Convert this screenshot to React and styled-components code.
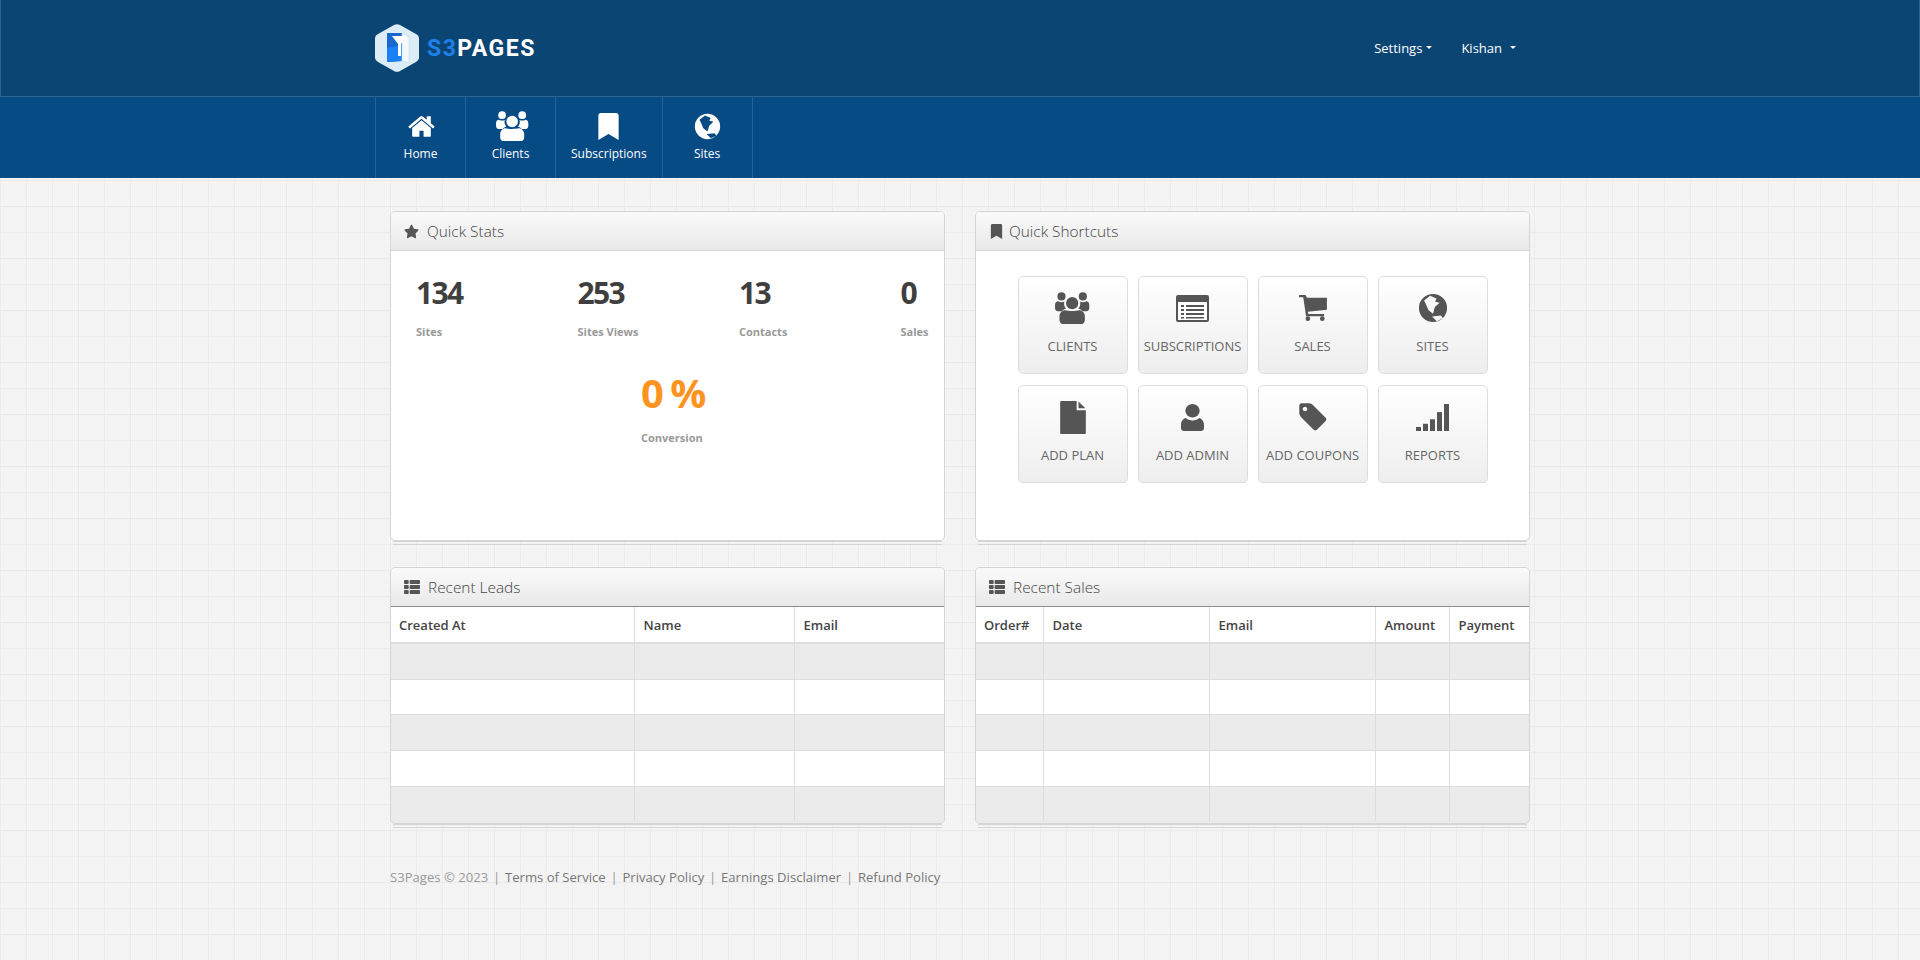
import React from 'react'
import styled, { createGlobalStyle } from 'styled-components'
import { FaBookmark, FaStar, FaThList } from 'react-icons/fa'

const Global = createGlobalStyle`
html, body { margin: 0; padding: 0; }
body {
  min-height: 960px;
  font-family: "Open Sans", sans-serif;
  font-size: 13px;
  color: #444;
  background-color: #f2f2f2;
  background-image:
    linear-gradient(#ebebeb 1px, transparent 1px),
    linear-gradient(90deg, #ebebeb 1px, transparent 1px),
    conic-gradient(#f8f8f8 25%, transparent 25%);
  background-size: 26px 26px, 26px 26px, 2px 2px;
  background-position: 0 24px, 0 0, 0 0;
}
`

const TopBar = styled.header`
  height: 96px;
  background: #0b4574;
  border: 1px solid #2a6596;
  border-top: 0;
  display: flex;
  justify-content: center;
`
const Inner = styled.div`
  width: 1170px;
  display: flex;
  align-items: center;
  justify-content: space-between;
`
const Brand = styled.a`
  display: flex;
  align-items: center;
  gap: 8px;
  font-family: Roboto, sans-serif;
  font-weight: 700;
  font-size: 23px;
  letter-spacing: 1.5px;
  color: #fff;
`
const BrandAccent = styled.span`
  color: #1f80ea;
`
const UserMenu = styled.div`
  display: flex;
  gap: 29px;
  margin-right: 29px;
  color: #fff;
  font-size: 13px;
`
const MenuItem = styled.a`
  display: flex;
  align-items: center;
  gap: ${p => p.$gap || 4}px;
`
const Caret = styled.span`
  width: 0;
  height: 0;
  margin-top: -1px;
  border-left: 3.5px solid transparent;
  border-right: 3.5px solid transparent;
  border-top: 3.5px solid #fff;
`
const SubNav = styled.nav`
  height: 81px;
  background: #074b85;
  display: flex;
  justify-content: center;
`
const SubNavInner = styled.div`
  width: 1170px;
  display: flex;
`
const NavItem = styled.a`
  min-width: 90px;
  padding: 0 15px;
  box-sizing: border-box;
  border-left: 1px solid #25619a;
  display: flex;
  flex-direction: column;
  align-items: center;
  color: #fff;
  font-size: 12px;
  &:last-child { border-right: 1px solid #25619a; min-width: 91px; }
`
const NavIcon = styled.span`
  height: 30px;
  margin-top: 14px;
  margin-bottom: 4px;
  margin-left: ${p => p.$shift || 0}px;
  font-size: 28px;
  display: flex;
  align-items: center;
`
const Page = styled.main`
  width: 1140px;
  margin: 33px auto 0;
`
const Grid = styled.div`
  display: grid;
  grid-template-columns: 555px 555px;
  column-gap: 30px;
  row-gap: 26px;
`
const Widget = styled.section`
  position: relative;
  box-sizing: border-box;
  background: ${p => p.$fill || '#fff'};
  border: 1px solid #d5d5d5;
  border-radius: 5px;
  height: ${p => p.$h}px;
  &::after {
    content: '';
    position: absolute;
    left: 2px;
    right: 2px;
    bottom: -5px;
    height: 2px;
    border-top: 1px solid #d5d5d5;
    border-bottom: 1px solid #d5d5d5;
  }
`
const WidgetHead = styled.div`
  height: 39px;
  box-sizing: border-box;
  padding-left: 13px;
  background: linear-gradient(#fafafa, #e9e9e9);
  border-bottom: 1px solid ${p => p.$dark ? '#8f8f8f' : '#d5d5d5'};
  border-radius: 4px 4px 0 0;
  display: flex;
  align-items: center;
  gap: ${p => p.$gap || 8}px;
  font-size: 15.4px;
  font-weight: 300;
  color: #444;
  svg { color: #555; font-size: 15px; }
`
const StatsRow = styled.div`
  display: grid;
  grid-template-columns: repeat(4, 161.5px);
  padding: 22px 0 0 25px;
`
const StatBox = styled.div`
  display: flex;
  flex-direction: column;
`
const StatNum = styled.div`
  font-size: 30px;
  line-height: 40px;
  font-weight: 700;
  letter-spacing: -1.6px;
  color: #3f3f3f;
`
const StatLabel = styled.div`
  margin-top: ${p => p.$top ?? 9}px;
  font-size: 11px;
  line-height: 20px;
  font-weight: 700;
  color: #999;
`
const Conversion = styled.div`
  display: flex;
  flex-direction: column;
  align-items: flex-start;
  margin-top: 24px;
  margin-left: 250px;
`
const ConversionNum = styled.div`
  font-size: 40px;
  line-height: 54px;
  font-weight: 700;
  letter-spacing: -2px;
  color: #ff931f;
`
const Shortcuts = styled.div`
  display: grid;
  grid-template-columns: repeat(4, 110px);
  grid-auto-rows: 98px;
  gap: 11px 10px;
  justify-content: center;
  padding-top: 25px;
`
const Shortcut = styled.a`
  box-sizing: border-box;
  border: 1px solid #ddd;
  border-radius: 5px;
  background: linear-gradient(#fff, #eee);
  display: flex;
  flex-direction: column;
  align-items: center;
  color: #666;
  font-size: 13px;
`
const ShortcutIcon = styled.span`
  height: 36px;
  margin-top: 13px;
  margin-bottom: 11px;
  color: #555;
  display: flex;
  align-items: center;
`
const Table = styled.table`
  width: 100%;
  border-collapse: collapse;
  table-layout: fixed;
`
const Th = styled.th`
  height: 36px;
  padding: 0 8px 0 9px;
  box-sizing: border-box;
  text-align: left;
  font-size: 13px;
  font-weight: 600;
  color: #444;
  background: #fff;
  border-left: 1px solid #ddd;
  border-bottom: 2px solid #ddd;
  &:first-child { border-left: 0; padding-left: 8px; }
`
const Tr = styled.tr`
  background: ${p => p.$odd ? '#ebebeb' : '#fff'};
`
const Td = styled.td`
  height: 34.7px;
  padding: 0;
  border-left: 1px solid #ddd;
  border-top: 1px solid #ddd;
  &:first-child { border-left: 0; }
`
const Footer = styled.footer`
  margin-top: 43px;
  font-size: 13.1px;
  line-height: 20px;
  color: #999;
`
const FootLink = styled.a`
  color: #777;
`
const FootSep = styled.span`
  margin: 0 1.4px;
`

const GroupSide = 'M0 38c0-7 4-11 9-11 3 2 6 3 10 3 3 0 6-.5 9-2-1 2-1.500 4-1.500 6 0 6 2 11 6 14.500-5 2-9 4-12 8H8c-5 0-8-4-8-10z'
const GroupIcon = ({ size = 34 }) => (
  <svg width={size} height={size * 0.93} viewBox="0 0 103 96" fill="currentColor">
    <circle cx="19" cy="13" r="12" />
    <circle cx="82" cy="13" r="12" />
    <path d={GroupSide} />
    <path d={GroupSide} transform="translate(101 0) scale(-1 1)" />
    <circle cx="50.500" cy="33" r="18" />
    <path d="M13 72c0-10 8-18 17-18 5 1.500 12 2 20.500 2s15.500-.5 20.500-2c9 0 17 8 17 18v10c0 8-6 14-14 14H27c-8 0-14-6-14-14z" />
  </svg>
)
const HomeIcon = () => (
  <svg width="29" height="29" viewBox="0 0 1792 1792" fill="currentColor">
    <path d="M1472 992v480q0 26-19 45t-45 19h-384v-384h-256v384h-384q-26 0-45-19t-19-45v-480q0-1 .5-3t.5-3l575-474 575 474q1 2 1 6zm223-69l-62 74q-8 9-21 11h-3q-13 0-21-7l-692-577-692 577q-12 8-24 7-13-2-21-11l-62-74q-8-10-7-23.500t11-21.500l719-599q32-26 76-26t76 26l244 204v-195q0-14 9-23t23-9h192q14 0 23 9t9 23v408l219 182q10 8 11 21.500t-7 23.500z" />
  </svg>
)
const GlobeIcon = ({ size = 30 }) => (
  <svg width={size} height={size} viewBox="0 0 32 32" fill="currentColor">
    <path
      fillRule="evenodd"
      d="M16 1a15 15 0 1 0 0 30 15 15 0 0 0 0-30zM6.500 8l6.500-5 7 3-2 3 5 1.500-5 4.500-2 7-5-4-2.500-6zM15 25l9.500-1 2 3-6.500 3z"
    />
  </svg>
)
const ListAltIcon = () => (
  <svg width="33" height="27" viewBox="0 0 33 27">
    <rect width="33" height="27" rx="2" fill="#555" />
    <rect x="2" y="7" width="29" height="18" fill="#fff" />
    <path d="M5 10h3v2H5zM10 10h18v2H10zM5 14h3v2H5zM10 14h18v2H10zM5 18h3v2H5zM10 18h18v2H10z" fill="#555" />
    <path d="M5 22h3v1.500H5zM10 22h18v1.500H10z" fill="#555" />
  </svg>
)
const CartIcon = () => (
  <svg width="30" height="26" viewBox="0 0 30 28" fill="#555">
    <path d="M0 0h7l1.500 3H30v13L9.500 18l.5 2.500h17V23H7.500L4.500 2.500H0z" />
    <circle cx="9.500" cy="25.500" r="2.500" />
    <circle cx="25" cy="25.500" r="2.500" />
  </svg>
)
const TagIcon = () => (
  <svg width="32" height="32" viewBox="0 0 1792 1792" fill="#555">
    <path d="M576 448q0-53-37.500-90.500t-90.500-37.500-90.500 37.500-37.500 90.500 37.500 90.500 90.500 37.500 90.500-37.500 37.500-90.500zm1067 576q0 53-37 90l-491 492q-39 37-91 37-53 0-90-37l-715-716q-38-37-64.500-101t-26.500-117v-416q0-52 38-90t90-38h416q53 0 117 26.500t102 64.500l715 714q37 39 37 91z" />
  </svg>
)
const FileIcon = () => (
  <svg width="28" height="33" viewBox="0 0 28 36" fill="#555">
    <path d="M1 0h17v10h10v25a1 1 0 0 1-1 1H1a1 1 0 0 1-1-1V1a1 1 0 0 1 1-1z" />
    <path d="M20 0.500 27.500 8H20z" />
  </svg>
)
const UserIcon = () => (
  <svg width="23" height="27" viewBox="0 0 24 30" preserveAspectRatio="none" fill="#555">
    <circle cx="12" cy="7.500" r="7.500" />
    <path d="M0 23c0-3.800 2.500-7 5-7.500 1.500 1.700 4 2.800 7 2.800s5.500-1.100 7-2.800c2.500.5 5 3.700 5 7.500v4c0 2-1.500 3-3 3H3c-1.500 0-3-1-3-3z" />
  </svg>
)
const SignalIcon = () => (
  <svg width="33" height="27" viewBox="0 0 33 30" preserveAspectRatio="none" fill="#555">
    <rect x="0" y="25.500" width="5" height="4.500" />
    <rect x="7" y="22" width="5" height="8" />
    <rect x="14" y="17" width="5" height="13" />
    <rect x="21" y="9" width="5" height="21" />
    <rect x="28" y="0" width="5" height="30" />
  </svg>
)
const LogoMark = () => (
  <svg width="44" height="48" viewBox="0 0 44 48">
    <path d="M19 1a6 6 0 0 1 6 0l16 9a5 5 0 0 1 3 5v18a5 5 0 0 1-3 5l-16 9a6 6 0 0 1-6 0L3 38a5 5 0 0 1-3-5V15a5 5 0 0 1 3-5z" fill="#dcedf8" />
    <path d="M12 9h15v28l-15 1z" fill="#1769d0" />
    <path d="M12 24l15-3v16l-15 1z" fill="#1a80f5" />
    <path d="M27 9l7 4v26l-7-2z" fill="#f4f9fd" stroke="#c8dcea" strokeWidth="0.7" />
    <path d="M17 12h15l-6 8v12h-3V20z" fill="#fff" />
  </svg>
)

const navItems = [
  { label: 'Home', icon: <HomeIcon />, shift: 1 },
  { label: 'Clients', icon: <GroupIcon size={33} />, shift: 4 },
  { label: 'Subscriptions', icon: <FaBookmark size={27} /> },
  { label: 'Sites', icon: <GlobeIcon size={27} />, shift: 1 },
]
const shortcuts = [
  { label: 'CLIENTS', icon: <GroupIcon size={35} /> },
  { label: 'SUBSCRIPTIONS', icon: <ListAltIcon /> },
  { label: 'SALES', icon: <CartIcon /> },
  { label: 'SITES', icon: <GlobeIcon size={30} /> },
  { label: 'ADD PLAN', icon: <FileIcon /> },
  { label: 'ADD ADMIN', icon: <UserIcon /> },
  { label: 'ADD COUPONS', icon: <TagIcon /> },
  { label: 'REPORTS', icon: <SignalIcon /> },
]
const stats = [
  { num: '134', label: 'Sites' },
  { num: '253', label: 'Sites Views' },
  { num: '13', label: 'Contacts' },
  { num: '0', label: 'Sales' },
]

const DataTable = ({ cols }) => (
  <Table>
    <colgroup>
      {cols.map(c => <col key={c.name} width={c.w} />)}
    </colgroup>
    <thead>
      <tr>{cols.map(c => <Th key={c.name}>{c.name}</Th>)}</tr>
    </thead>
    <tbody>
      {[0, 1, 2, 3, 4].map(r => (
        <Tr key={r} $odd={r % 2 === 0}>
          {cols.map(c => <Td key={c.name} />)}
        </Tr>
      ))}
    </tbody>
  </Table>
)

const App = () => (
  <>
    <Global />
    <TopBar>
      <Inner>
        <Brand><LogoMark /><span><BrandAccent>S3</BrandAccent>PAGES</span></Brand>
        <UserMenu>
          <MenuItem>Settings<Caret /></MenuItem>
          <MenuItem $gap={8}>Kishan<Caret /></MenuItem>
        </UserMenu>
      </Inner>
    </TopBar>
    <SubNav>
      <SubNavInner>
        {navItems.map(n => (
          <NavItem key={n.label}>
            <NavIcon $shift={n.shift}>{n.icon}</NavIcon>
            {n.label}
          </NavItem>
        ))}
      </SubNavInner>
    </SubNav>
    <Page>
      <Grid>
        <Widget $h={330}>
          <WidgetHead><FaStar />Quick Stats</WidgetHead>
          <StatsRow>
            {stats.map(s => (
              <StatBox key={s.label}>
                <StatNum>{s.num}</StatNum>
                <StatLabel>{s.label}</StatLabel>
              </StatBox>
            ))}
          </StatsRow>
          <Conversion>
            <ConversionNum>0 %</ConversionNum>
            <StatLabel $top={8}>Conversion</StatLabel>
          </Conversion>
        </Widget>
        <Widget $h={330}>
          <WidgetHead $gap={5}><FaBookmark />Quick Shortcuts</WidgetHead>
          <Shortcuts>
            {shortcuts.map(s => (
              <Shortcut key={s.label}>
                <ShortcutIcon>{s.icon}</ShortcutIcon>
                {s.label}
              </Shortcut>
            ))}
          </Shortcuts>
        </Widget>
        <Widget $h={257} $fill="#ebebeb">
          <WidgetHead $dark><FaThList size={16} />Recent Leads</WidgetHead>
          <DataTable cols={[{ name: 'Created At', w: 243 }, { name: 'Name', w: 160 }, { name: 'Email', w: 150 }]} />
        </Widget>
        <Widget $h={257} $fill="#ebebeb">
          <WidgetHead $dark><FaThList size={16} />Recent Sales</WidgetHead>
          <DataTable cols={[{ name: 'Order#', w: 67 }, { name: 'Date', w: 166 }, { name: 'Email', w: 166 }, { name: 'Amount', w: 74 }, { name: 'Payment', w: 80 }]} />
        </Widget>
      </Grid>
      <Footer>
        S3Pages © 2023 <FootSep>|</FootSep> <FootLink>Terms of Service</FootLink> <FootSep>|</FootSep> <FootLink>Privacy Policy</FootLink> <FootSep>|</FootSep> <FootLink>Earnings Disclaimer</FootLink> <FootSep>|</FootSep> <FootLink>Refund Policy</FootLink>
      </Footer>
    </Page>
  </>
)

export default App
